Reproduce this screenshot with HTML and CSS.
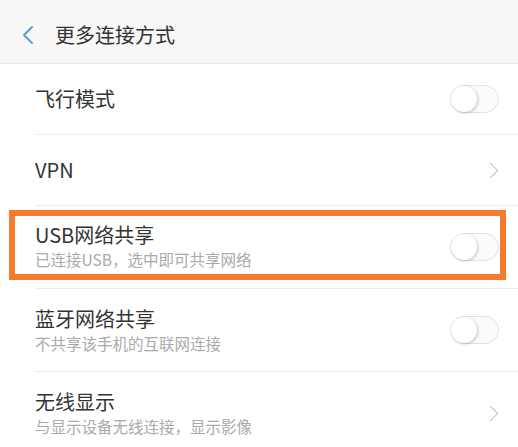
FILE: index.html
```html
<!DOCTYPE html>
<html lang="zh-CN">
<head>
    <meta charset="UTF-8">
    <meta name="viewport" content="width=device-width, initial-scale=1.0">
    <title>更多连接方式</title>
    <link rel="stylesheet" href="styles.css">
</head>
<body>
    <div class="header">
        <svg class="back" width="14" height="20" viewBox="0 0 14 20">
            <path d="M11 2 L3 10 L11 18" fill="none" stroke="#5b9fe0" stroke-width="2" stroke-linecap="round" stroke-linejoin="round"/>
        </svg>
        <h1>更多连接方式</h1>
    </div>

    <div class="list">
        <div class="row">
            <div class="text"><div class="title">飞行模式</div></div>
            <span class="switch"></span>
        </div>
        <div class="row">
            <div class="text"><div class="title">VPN</div></div>
            <span class="chevron"></span>
        </div>
        <div class="row tall marked">
            <div class="text">
                <div class="title">USB网络共享</div>
                <div class="sub">已连接USB，选中即可共享网络</div>
            </div>
            <span class="switch"></span>
            <span class="highlight"></span>
        </div>
        <div class="row tall">
            <div class="text">
                <div class="title">蓝牙网络共享</div>
                <div class="sub">不共享该手机的互联网连接</div>
            </div>
            <span class="switch"></span>
        </div>
        <div class="row tall">
            <div class="text">
                <div class="title">无线显示</div>
                <div class="sub">与显示设备无线连接，显示影像</div>
            </div>
            <span class="chevron"></span>
        </div>
    </div>
</body>
</html>
```

FILE: styles.css
```css
* {
    margin: 0;
    padding: 0;
    box-sizing: border-box;
    font-family: "Noto Sans CJK SC", "Noto Sans", sans-serif;
}

body {
    background-color: white;
    width: 518px;
    height: 447px;
    overflow: hidden;
}

.header {
    height: 64px;
    background-color: #f7f7f7;
    border-bottom: 1px solid #e9e9e9;
    display: flex;
    align-items: center;
    padding-left: 21px;
    padding-top: 6px;
}

.back {
    margin-right: 20px;
}

h1 {
    font-size: 20px;
    font-weight: 400;
    color: #333;
}

.row {
    position: relative;
    height: 71px;
    margin-left: 35px;
    padding-right: 19px;
    border-bottom: 1px solid #ececec;
    display: flex;
    align-items: center;
    justify-content: space-between;
}

.row.tall {
    height: 83px;
}

.title {
    font-size: 20px;
    line-height: 26px;
    color: #333;
}

.sub {
    font-size: 15.5px;
    line-height: 22px;
    color: #aaa;
}

.marked .text {
    margin-top: -2px;
}

.switch {
    position: relative;
    width: 49px;
    height: 28px;
    border: 1px solid #e2e2e2;
    border-radius: 14px;
    background-color: #fbfbfb;
}

.switch::after {
    content: "";
    position: absolute;
    left: 0;
    top: 0;
    width: 26px;
    height: 26px;
    border-radius: 50%;
    background-color: white;
    box-shadow: 1px 1px 3px rgba(0,0,0,0.22);
}

.chevron {
    width: 11px;
    height: 11px;
    border-top: 1.5px solid #bdbdbd;
    border-right: 1.5px solid #bdbdbd;
    transform: rotate(45deg);
    margin-right: 3px;
}

.highlight {
    position: absolute;
    left: -26px;
    top: 4px;
    width: 497px;
    height: 70px;
    border: 6px solid #f57a2b;
}
```
